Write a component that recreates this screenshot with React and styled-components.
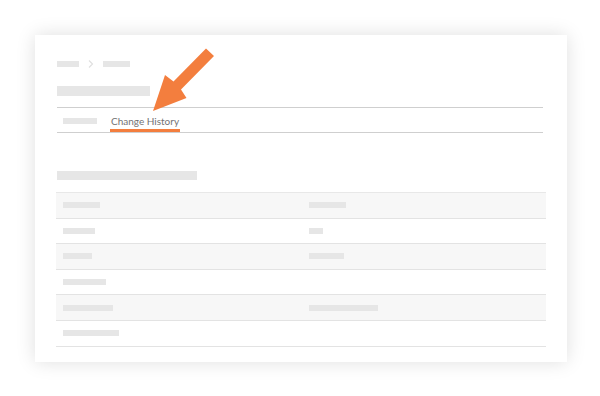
import React from "react";
import styled, { createGlobalStyle } from "styled-components";

const GlobalStyle = createGlobalStyle`
  html, body {
    margin: 0;
    padding: 0;
    background: #ffffff;
    font-family: Lato, "Open Sans", sans-serif;
  }
`;

const Page = styled.div`
  position: relative;
  width: 600px;
  height: 396px;
  padding: 35px 0 0 35px;
  box-sizing: border-box;
  overflow: hidden;
`;

const Card = styled.div`
  width: 532px;
  height: 327px;
  box-sizing: border-box;
  padding: 26px 21px 0 21px;
  background: #fff;
  box-shadow: 0 0 18px rgba(0, 0, 0, 0.13);
`;

const Bar = styled.div`
  width: ${(p) => p.w}px;
  height: ${(p) => p.h || 6}px;
  background: #e6e6e6;
`;

const Crumbs = styled.div`
  display: flex;
  align-items: center;
  gap: 6px;
  padding-left: 1px;
  height: 6px;
`;

const Chevron = styled.svg`
  width: 6px;
  height: 8px;
  margin: 0 3px;
`;

const Title = styled.div`
  margin: 19px 0 0 1px;
`;

const Tabs = styled.div`
  display: flex;
  align-items: stretch;
  margin: 11px 3px 0 1px;
  height: 24px;
  border-top: 1px solid #cfcfcf;
  border-bottom: 1px solid #cfcfcf;
`;

const Tab = styled.div`
  display: flex;
  align-items: center;
  padding: 1px ${(p) => (p.active ? 1 : 0)}px 0;
  margin-left: ${(p) => p.offset}px;
  font-size: 10px;
  color: #737373;
  box-shadow: ${(p) => (p.active ? "inset 0 -3px 0 #f37e3e" : "none")};
`;

const Section = styled.div`
  margin: 38px 0 0 1px;
`;

const Table = styled.div`
  margin-top: 12px;
  border-top: 1px solid #e8e8e8;
`;

const Row = styled.div`
  display: grid;
  grid-template-columns: 246px 1fr;
  align-items: center;
  height: 25.6px;
  box-sizing: border-box;
  background: ${(p) => (p.shaded ? "#f7f7f7" : "#fff")};
  border-bottom: 1px solid #e3e3e3;
`;

const Cell = styled.div`
  padding-left: 7px;
`;

const Arrow = styled.svg`
  position: absolute;
  left: 0;
  top: 0;
  width: 600px;
  height: 396px;
  pointer-events: none;
`;

const rows = [
  [37, 37],
  [32, 14],
  [29, 35],
  [43, 0],
  [50, 69],
  [56, 0],
];

export default function App() {
  return (
    <>
      <GlobalStyle />
      <Page>
        <Card>
          <Crumbs>
            <Bar w={22} />
            <Chevron viewBox="0 0 6 8">
              <path d="M1 0.5 L4.5 4 L1 7.5" fill="none" stroke="#e0e0e0" strokeWidth="1.2" />
            </Chevron>
            <Bar w={27} />
          </Crumbs>
          <Title>
            <Bar w={93} h={10} />
          </Title>
          <Tabs>
            <Tab offset={6}>
              <Bar w={34} />
            </Tab>
            <Tab offset={13} active>
              Change History
            </Tab>
          </Tabs>
          <Section>
            <Bar w={140} h={9} />
          </Section>
          <Table>
            {rows.map(([a, b], i) => (
              <Row key={i} shaded={i % 2 === 0}>
                <Cell>
                  <Bar w={a} />
                </Cell>
                <Cell>{b > 0 && <Bar w={b} />}</Cell>
              </Row>
            ))}
          </Table>
        </Card>
        <Arrow viewBox="0 0 600 396">
          <polygon
            points="214,56 206,48.5 173.5,81.5 165,75 153,111 186.5,98 181,89.5"
            fill="#f37e3e"
          />
        </Arrow>
      </Page>
    </>
  );
}
